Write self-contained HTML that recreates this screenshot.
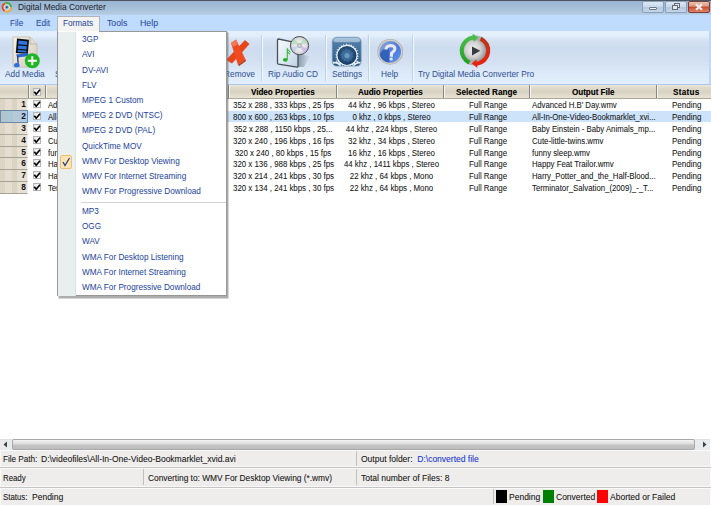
<!DOCTYPE html>
<html><head><meta charset="utf-8">
<style>
*{box-sizing:border-box;margin:0;padding:0}
html,body{width:711px;height:505px;overflow:hidden;background:#fff}
body{position:relative;font-family:"Liberation Sans",sans-serif;font-size:8.2px;color:#1e1e1e}
.a{position:absolute;white-space:nowrap}
#title{left:0;top:0;width:711px;height:15px;background:linear-gradient(#4c5660 0,#4c5660 1px,#9ab6d1 1px,#a2bcd6 6px,#aac3dc 10px,#b4cae0 14px,#bcd6f4 15px)}
#menubar{left:0;top:15px;width:711px;height:16px;background:#bfdbfd}
#toolbar{left:0;top:31px;width:709px;height:53px;background:linear-gradient(#e4effc 0,#e4effc 5px,#d6e4f4 8px,#cddcee 17px,#d2e0f1 30px,#dceaf9 42px,#e2eefb 53px)}
.mi{color:#23439a;font-size:8.4px}
.mm{font-size:9px;transform:scaleX(0.91);transform-origin:0 0}
.tl{color:#2f4f90;font-size:8.8px;transform:scaleX(0.945);transform-origin:0 0}
.sep{position:absolute;top:35px;width:1px;height:46px;background:#b9d2ee;box-shadow:1px 0 0 #f4f9ff}
#hdr{left:0;top:84px;width:711px;height:15px;background:linear-gradient(#aac8ee 0,#aac8ee 1px,#ece7da 1px,#e0dacb 4px,#d8d2c2 8px,#e2ddce 12px,#e6e2d4 14px,#aca898 14px)}
.hd{position:absolute;top:85px;width:1px;height:13px;background:#84888c;box-shadow:1px 0 0 #f8f4ea}
.hb{font-weight:bold;color:#000;font-size:8.6px;top:86.8px;transform:scaleX(0.935);transform-origin:0 0;text-shadow:0.2px 0 0 rgba(0,0,0,0.3)}
.rh{position:absolute;left:0;width:28px;height:12px;background:linear-gradient(90deg,#dcd4c4 0,#dcd4c4 5px,#e4ddd0 5px,#e4ddd0 12px,#dad3c4 12px,#dad3c4 17px,#e6e0d4 17px);border-bottom:1px solid #a8a294;border-right:1px solid #f4f0e8}
.rn{position:absolute;right:1.2px;top:0px;font-weight:bold;font-size:8.8px;color:#111;transform:scaleX(0.95);transform-origin:100% 0}
.cb{position:absolute;left:33px;width:8px;height:8px;border:1px solid #b4b4b4;background:linear-gradient(135deg,#e8e8e8,#fff)}
.cb svg{position:absolute;left:-1px;top:-1px}
.cl{transform:scaleX(0.94);transform-origin:0 0}
.cc{transform:scaleX(0.925);transform-origin:50% 0}
.cell{font-size:8.5px;color:#1a1a1a;text-shadow:0.2px 0 0 rgba(0,0,0,0.22)}
.strip{position:absolute;left:1px;width:709px;background:#efedeb}
.st{font-size:9px;color:#1a1a1a;transform-origin:0 0;transform:scaleX(0.945);text-shadow:0.2px 0 0 rgba(0,0,0,0.25)}
</style></head><body>

<!-- Title bar -->
<div id="title" class="a"></div>
<svg class="a" style="left:1px;top:1px" width="13" height="13" viewBox="0 0 13 13">
  <circle cx="5.8" cy="6.2" r="4.4" fill="#d8e4ee"></circle>
  <circle cx="5.8" cy="6.2" r="4.2" fill="none" stroke="#e04a28" stroke-width="2" stroke-dasharray="9 30" transform="rotate(120 5.8 6.2)"></circle>
  <circle cx="5.8" cy="6.2" r="4.2" fill="none" stroke="#3cb040" stroke-width="2" stroke-dasharray="8 30" transform="rotate(250 5.8 6.2)"></circle>
  <circle cx="5.8" cy="6.2" r="4.2" fill="none" stroke="#f0a838" stroke-width="2" stroke-dasharray="8 30" transform="rotate(0 5.8 6.2)"></circle>
  <circle cx="5.8" cy="6.2" r="2.2" fill="#9ab4cc"></circle>
  <circle cx="5.8" cy="6.2" r="1" fill="#384858"></circle>
</svg>
<div class="a" style="left:17.8px;top:2.1px;font-size:9.2px;color:#18202c;transform:scaleX(0.915);transform-origin:0 0">Digital Media Converter</div>
<!-- window buttons -->
<div class="a" style="left:642px;top:1px;width:22px;height:12px;border:1px solid #8a9fb8;border-radius:2px;background:linear-gradient(#dde8f4,#c8d8ea 50%,#b4c8de 51%,#c4d6ea)"></div>
<div class="a" style="left:649px;top:7px;width:8px;height:3px;background:#f4f4f4;border:1px solid #6a7888;border-radius:1px"></div>
<div class="a" style="left:665px;top:1px;width:22px;height:12px;border:1px solid #8a9fb8;border-radius:2px;background:linear-gradient(#dde8f4,#c8d8ea 50%,#b4c8de 51%,#c4d6ea)"></div>
<div class="a" style="left:674px;top:3px;width:6px;height:5px;background:#e8e8e8;border:1px solid #606a78"></div>
<div class="a" style="left:672px;top:5px;width:6px;height:5px;background:#e8e8e8;border:1px solid #606a78"></div>
<div class="a" style="left:688px;top:1px;width:22px;height:12px;border:1px solid #7a4038;border-radius:2px;background:linear-gradient(#ecc4b4,#dc9c84 40%,#c84830 52%,#d45a40 62%,#dc8466)"></div>
<svg class="a" style="left:694px;top:3px" width="10" height="8" viewBox="0 0 10 8"><path d="M2 1.2 L8 6.8 M8 1.2 L2 6.8" stroke="#f0eeee" stroke-width="2.2"></path></svg>

<!-- Menu bar -->
<div id="menubar" class="a"></div>
<div class="a mi mm" style="left:10px;top:18.2px">File</div>
<div class="a mi mm" style="left:36px;top:18.2px">Edit</div>
<div class="a mi mm" style="left:106.5px;top:18.2px;transform:scaleX(0.97)">Tools</div>
<div class="a mi mm" style="left:139.8px;top:18.2px;transform:scaleX(0.98)">Help</div>

<!-- Toolbar -->
<div id="toolbar" class="a"></div>
<div class="a" style="left:709px;top:31px;width:2px;height:53px;background:#bcd8f8"></div>
<!-- Add Media icon -->
<svg class="a" style="left:12px;top:36px" width="28" height="33" viewBox="0 0 28 33">
  <defs><linearGradient id="docg" x1="0" y1="0" x2="1" y2="1"><stop offset="0" stop-color="#f6f2ea"></stop><stop offset="1" stop-color="#d4ccbc"></stop></linearGradient></defs>
  <path d="M1 1 H18 L25 8 V31 H1 Z" fill="url(#docg)" stroke="#c0b8a8" stroke-width="0.8"></path>
  <path d="M18 1 V8 H25" fill="#e4dccc" stroke="#a8a090" stroke-width="0.6"></path>
  <path d="M5 2.5 L17 3.7 L15.8 18 L3.8 17 Z" fill="#0c1218"></path>
  <path d="M6.6 4.6 L15.2 5.4 L14.9 9 L6.3 8.2 Z M6.2 9.4 L14.8 10.2 L14.5 13.6 L5.9 12.8 Z M5.8 14 L14.4 14.8 L14.2 16.6 L5.6 15.8 Z" fill="#2f74e0"></path>
  <path d="M4 18.6 L15 17 L17 19 L15 20.2 L5.5 21.4 Z" fill="#2c66d0"></path>
  <path d="M5.6 20 L6.2 29" stroke="#1c3c80" stroke-width="1.3"></path>
  <ellipse cx="4.8" cy="29.2" rx="2.8" ry="2.1" fill="#2f70e0"></ellipse>
  <circle cx="20.3" cy="24.7" r="7.5" fill="#1eb422"></circle>
  <path d="M20.3 20.2 V29.2 M15.8 24.7 H24.8" stroke="#fff" stroke-width="2"></path>
</svg>
<div class="a tl" style="left:5px;top:69.3px">Add Media</div>
<div class="a tl" style="left:55.3px;top:69.3px">S</div>

<!-- Remove X -->
<svg class="a" style="left:222px;top:32px" width="32" height="36" viewBox="0 0 32 36">
  <path d="M23 8 L27.5 12 L10 31.5 L4 28 Z" fill="#e8441a"></path>
  <path d="M9 11 L14 7.5 L23.5 27.5 L16 33 Z" fill="#ee4c20"></path>
  <path d="M9 11 L14 7.5 L16 12 L11 15 Z" fill="#f47850"></path>
  <path d="M16 33 L23.5 27.5 L24 29 L17 34 Z" fill="#b03010"></path>
</svg>
<div class="a tl" style="left:223.5px;top:68.7px">Remove</div>
<div class="sep" style="left:261px"></div>

<!-- Rip Audio CD -->
<svg class="a" style="left:274px;top:34px" width="40" height="36" viewBox="0 0 40 36">
  <defs><linearGradient id="ripg" x1="0" y1="0" x2="1" y2="1"><stop offset="0" stop-color="#f6f9fc"></stop><stop offset="0.5" stop-color="#e0eaf4"></stop><stop offset="1" stop-color="#bcd0e4"></stop></linearGradient>
  <radialGradient id="cdg"><stop offset="0" stop-color="#f4f4f4"></stop><stop offset="0.6" stop-color="#e6e6ea"></stop><stop offset="1" stop-color="#cacad2"></stop></radialGradient>
  <linearGradient id="shd" x1="0" y1="0" x2="1" y2="0"><stop offset="0" stop-color="#506070" stop-opacity="0.55"></stop><stop offset="1" stop-color="#506070" stop-opacity="0"></stop></linearGradient></defs>
  <path d="M24 20 L36 22 L30 33 L24 33 Z" fill="url(#shd)"></path>
  <path d="M4.5 5 Q3.5 5 3.5 6 L3.5 29 Q3.5 30 4.5 30.2 L23 33.2 Q24 33.3 24 32.3 L24 12 L17 7.5 Z" fill="url(#ripg)" stroke="#4a5058" stroke-width="1.3"></path>
  <circle cx="25.5" cy="11.6" r="9.1" fill="url(#cdg)" stroke="#484850" stroke-width="1"></circle>
  <path d="M25.5 11.6 L17.5 9 A8.5 8.5 0 0 1 20.5 4.6 Z" fill="#a8dca8" opacity="0.75"></path>
  <path d="M25.5 11.6 L33.5 14.5 A8.5 8.5 0 0 1 30 19 Z" fill="#c4b4ec" opacity="0.75"></path>
  <path d="M25.5 11.6 L29.5 4 A8.5 8.5 0 0 1 33.6 8.6 Z" fill="#a8dca8" opacity="0.65"></path>
  <path d="M25.5 11.6 L17.2 13.5 A8.5 8.5 0 0 0 20 18.2 Z" fill="#b4ccf0" opacity="0.6"></path>
  <circle cx="25.5" cy="11.6" r="2" fill="#d0d0d8" stroke="#9090a0" stroke-width="0.6"></circle>
  <path d="M13.3 25.5 L13.3 15 L16.5 18.5 M13.3 17.5 L16 20.5" fill="none" stroke="#38b838" stroke-width="1.1"></path>
  <ellipse cx="11.3" cy="25.8" rx="2.4" ry="1.9" fill="#28b028"></ellipse>
</svg>
<div class="a tl" style="left:268px;top:68.7px">Rip Audio CD</div>
<div class="sep" style="left:325px"></div>

<!-- Settings -->
<svg class="a" style="left:331px;top:36px" width="32" height="32" viewBox="0 0 32 32">
  <defs><linearGradient id="setg" x1="0" y1="0" x2="0" y2="1"><stop offset="0" stop-color="#8aaccb"></stop><stop offset="0.18" stop-color="#4f7ca6"></stop><stop offset="0.6" stop-color="#3a6a96"></stop><stop offset="1" stop-color="#2e5a84"></stop></linearGradient>
  <radialGradient id="setin" cx="0.5" cy="0.45" r="0.55"><stop offset="0" stop-color="#4a7aa8"></stop><stop offset="0.5" stop-color="#2a5580"></stop><stop offset="1" stop-color="#173a60"></stop></radialGradient>
  <clipPath id="setc"><rect x="1.3" y="1.2" width="28.8" height="28.9" rx="4.5"></rect></clipPath></defs>
  <rect x="1.3" y="1.2" width="28.8" height="28.9" rx="4.5" fill="url(#setg)"></rect>
  <g clip-path="url(#setc)">
  <rect x="2.5" y="2" width="26.5" height="4.2" rx="2" fill="#c0d4e6" opacity="0.65"></rect>
  <circle cx="16" cy="19.4" r="10.6" fill="#dce8f2"></circle>
  <path d="M26.30 19.40 L28.28 20.14 L26.22 20.64 L26.00 21.86 L27.74 23.06 L25.63 23.05 L25.12 24.19 L26.53 25.76 L24.48 25.25 L23.71 26.23 L24.70 28.10 L22.83 27.11 L21.85 27.88 L22.36 29.93 L20.79 28.52 L19.65 29.03 L19.66 31.14 L18.46 29.40 L17.24 29.62 L16.74 31.68 L16.00 29.70 L14.76 29.62 L13.78 31.50 L13.54 29.40 L12.35 29.03 L10.95 30.62 L11.21 28.52 L10.15 27.88 L8.41 29.08 L9.17 27.11 L8.29 26.23 L6.32 26.99 L7.52 25.25 L6.88 24.19 L4.78 24.45 L6.37 23.05 L6.00 21.86 L3.90 21.62 L5.78 20.64 L5.70 19.40 L3.72 18.66 L5.78 18.16 L6.00 16.94 L4.26 15.74 L6.37 15.75 L6.88 14.61 L5.47 13.04 L7.52 13.55 L8.29 12.57 L7.30 10.70 L9.17 11.69 L10.15 10.92 L9.64 8.87 L11.21 10.28 L12.35 9.77 L12.34 7.66 L13.54 9.40 L14.76 9.18 L15.26 7.12 L16.00 9.10 L17.24 9.18 L18.22 7.30 L18.46 9.40 L19.65 9.77 L21.05 8.18 L20.79 10.28 L21.85 10.92 L23.59 9.72 L22.83 11.69 L23.71 12.57 L25.68 11.81 L24.48 13.55 L25.12 14.61 L27.22 14.35 L25.63 15.75 L26.00 16.94 L28.10 17.18 L26.22 18.16 Z" fill="#eef4fa"></path>
  <circle cx="16" cy="19.4" r="9.5" fill="url(#setin)"></circle>
  <path d="M21.40 19.40 L22.70 20.57 L21.08 21.23 L20.37 22.57 L20.73 24.28 L19.04 23.87 L17.67 24.54 L16.96 26.13 L15.83 24.80 L14.33 24.54 L12.82 25.41 L12.69 23.67 L11.63 22.57 L9.89 22.39 L10.81 20.91 L10.60 19.40 L9.30 18.23 L10.92 17.57 L11.63 16.23 L11.27 14.52 L12.96 14.93 L14.33 14.26 L15.04 12.67 L16.17 14.00 L17.67 14.26 L19.18 13.39 L19.31 15.13 L20.37 16.23 L22.11 16.41 L21.19 17.89 Z" fill="#3c6c9a"></path>
  <circle cx="16" cy="19.5" r="2.6" fill="#6a98c0"></circle>
  <path d="M11.16 33.72 L12.37 34.97 L10.73 35.55 L9.84 37.20 L10.27 38.89 L8.56 38.57 L6.96 39.56 L6.48 41.23 L5.16 40.11 L3.28 40.16 L2.03 41.37 L1.45 39.73 L-0.20 38.84 L-1.89 39.27 L-1.57 37.56 L-2.56 35.96 L-4.23 35.48 L-3.11 34.16 L-3.16 32.28 L-4.37 31.03 L-2.73 30.45 L-1.84 28.80 L-2.27 27.11 L-0.56 27.43 L1.04 26.44 L1.52 24.77 L2.84 25.89 L4.72 25.84 L5.97 24.63 L6.55 26.27 L8.20 27.16 L9.89 26.73 L9.57 28.44 L10.56 30.04 L12.23 30.52 L11.11 31.84 Z" fill="#e4eef6"></path>
  <path d="M35.06 34.43 L36.13 35.79 L34.45 36.21 L33.40 37.77 L33.65 39.49 L31.98 39.00 L30.29 39.83 L29.65 41.44 L28.44 40.19 L26.57 40.06 L25.21 41.13 L24.79 39.45 L23.23 38.40 L21.51 38.65 L22.00 36.98 L21.17 35.29 L19.56 34.65 L20.81 33.44 L20.94 31.57 L19.87 30.21 L21.55 29.79 L22.60 28.23 L22.35 26.51 L24.02 27.00 L25.71 26.17 L26.35 24.56 L27.56 25.81 L29.43 25.94 L30.79 24.87 L31.21 26.55 L32.77 27.60 L34.49 27.35 L34.00 29.02 L34.83 30.71 L36.44 31.35 L35.19 32.56 Z" fill="#e4eef6"></path>
  <circle cx="4" cy="33" r="5.4" fill="#2a5680"></circle>
  <circle cx="28" cy="33" r="5.4" fill="#2a5680"></circle>
  </g>
  <rect x="1.3" y="1.2" width="28.8" height="28.9" rx="4.5" fill="none" stroke="#6a90b0" stroke-width="0.7"></rect>
</svg>
<div class="a tl" style="left:332px;top:68.7px">Settings</div>
<div class="sep" style="left:368px"></div>

<!-- Help -->
<svg class="a" style="left:376px;top:38px" width="28" height="28" viewBox="0 0 28 28">
  <defs><linearGradient id="hg" x1="0" y1="0" x2="1" y2="1"><stop offset="0" stop-color="#a0b4d8"></stop><stop offset="0.4" stop-color="#5a84dc"></stop><stop offset="0.6" stop-color="#4a78e4"></stop><stop offset="1" stop-color="#6a9ce0"></stop></linearGradient></defs>
  <circle cx="14.2" cy="13.8" r="12.8" fill="#a8a49c"></circle>
  <circle cx="14.2" cy="13.8" r="12.2" fill="#d4d0ca"></circle>
  <circle cx="14.2" cy="13.8" r="10.8" fill="url(#hg)"></circle>
  <path d="M3.6 17 Q5 10.5 13 10 L13.5 24.6 Q6 24 3.6 17 Z" fill="#2c5cb4" opacity="0.85"></path>
  <path d="M10 11.5 Q10.3 7.6 14.8 7.5 Q19.3 7.7 18.8 11.3 Q18.4 13.4 15.8 15 L15.2 18.8" fill="none" stroke="#e8e8ec" stroke-width="3.2"></path>
  <rect x="13.6" y="19.6" width="3" height="2.8" fill="#e4e4e8"></rect>
</svg>
<div class="a tl" style="left:381px;top:68.7px">Help</div>
<div class="sep" style="left:412px"></div>

<!-- Converter Pro -->
<svg class="a" style="left:458px;top:34px" width="34" height="35" viewBox="0 0 34 35">
  <defs><radialGradient id="sph" cx="0.42" cy="0.45" r="0.62"><stop offset="0" stop-color="#f2f2f2"></stop><stop offset="0.55" stop-color="#d0d0d0"></stop><stop offset="1" stop-color="#888"></stop></radialGradient>
  <linearGradient id="grn" x1="0" y1="0" x2="0" y2="1"><stop offset="0" stop-color="#50c050"></stop><stop offset="1" stop-color="#20a020"></stop></linearGradient>
  <linearGradient id="red" x1="0" y1="0" x2="0" y2="1"><stop offset="0" stop-color="#b83818"></stop><stop offset="1" stop-color="#f02010"></stop></linearGradient></defs>
  <circle cx="17" cy="16.6" r="15" fill="#b0b0b0"></circle>
  <circle cx="17" cy="16.6" r="11.6" fill="url(#sph)"></circle>
  <path d="M10.53 30.47 A15.30 15.30 0 0 1 14.87 1.45 L14.56 -0.73 L20.21 3.74 L15.75 7.69 L15.44 5.51 A11.20 11.20 0 0 0 12.27 26.75 Z" fill="url(#grn)"></path>
  <path d="M23.47 2.73 A15.30 15.30 0 0 1 19.13 31.75 L19.44 33.93 L13.79 29.46 L18.25 25.51 L18.56 27.69 A11.20 11.20 0 0 0 21.73 6.45 Z" fill="url(#red)"></path>
  <path d="M14 12.6 L22.3 16.8 L14 21.4 Z" fill="#3a3a42"></path>
</svg>
<div class="a tl" style="left:418px;top:68.7px">Try Digital Media Converter Pro</div>

<!-- Grid header -->
<div id="hdr" class="a"></div>
<div class="hd" style="left:28px"></div>
<div class="hd" style="left:45px"></div>
<div class="hd" style="left:228px"></div>
<div class="hd" style="left:336px"></div>
<div class="hd" style="left:443px"></div>
<div class="hd" style="left:529px"></div>
<div class="hd" style="left:656px"></div>
<div class="cb" style="top:88px"><svg width="8" height="8" viewBox="0 0 8 8"><path d="M1.3 3.8 L3.2 6.2 L7 1.8" fill="none" stroke="#000" stroke-width="1.7"></path></svg></div>
<div class="a hb" style="left:251px">Video Properties</div>
<div class="a hb" style="left:358px">Audio Properties</div>
<div class="a hb" style="left:456.3px;letter-spacing:0.1px">Selected Range</div>
<div class="a hb" style="left:572px">Output File</div>
<div class="a hb" style="left:673px;letter-spacing:0.35px">Status</div>

<!-- Rows -->
<div class="a" style="left:28px;top:111px;width:683px;height:11px;background:#cce3fa"></div>
<div class="rh" style="top:99px;height:12px;"><span class="rn">1</span></div><div class="cb" style="top:100px"><svg width="8" height="8" viewBox="0 0 8 8"><path d="M1.3 3.8 L3.2 6.2 L7 1.8" fill="none" stroke="#000" stroke-width="1.7"></path></svg></div><div class="a cell cl" style="left:47.5px;top:99.6px;transform:scaleX(0.9)">Advanced H.B' Day.wmv</div><div class="a cell cc" style="left:229px;width:108px;text-align:center;top:99.6px">352 x 288 , 333 kbps , 25 fps</div><div class="a cell cc" style="left:338px;width:107px;text-align:center;top:99.6px">44 khz , 96 kbps , Stereo</div><div class="a cell cc" style="left:445px;width:86px;text-align:center;top:99.6px">Full Range</div><div class="a cell cl" style="left:532px;top:99.6px;transform:scaleX(0.915)">Advanced H.B' Day.wmv</div><div class="a cell cl" style="left:672px;top:99.6px">Pending</div><div class="rh" style="top:111px;height:12px;background:linear-gradient(90deg,#b4c4cc 0,#b4c4cc 5px,#a8c8d4 5px,#a8c8d4 12px,#b8c8d4 12px,#b8c8d4 17px,#b0c8e2 17px);border:1px solid #6a8aa8;top:110px;height:13px"><span class="rn">2</span></div><div class="cb" style="top:112px"><svg width="8" height="8" viewBox="0 0 8 8"><path d="M1.3 3.8 L3.2 6.2 L7 1.8" fill="none" stroke="#000" stroke-width="1.7"></path></svg></div><div class="a cell cl" style="left:47.5px;top:111.6px;transform:scaleX(0.9)">All-In-One-Video-Bookmarklet_xvid.avi</div><div class="a cell cc" style="left:229px;width:108px;text-align:center;top:111.6px">800 x 600 , 263 kbps , 10 fps</div><div class="a cell cc" style="left:338px;width:107px;text-align:center;top:111.6px">0 khz , 0 kbps , Stereo</div><div class="a cell cc" style="left:445px;width:86px;text-align:center;top:111.6px">Full Range</div><div class="a cell cl" style="left:532px;top:111.6px;transform:scaleX(0.915)">All-In-One-Video-Bookmarklet_xvi...</div><div class="a cell cl" style="left:672px;top:111.6px">Pending</div><div class="rh" style="top:123px;height:12px;"><span class="rn">3</span></div><div class="cb" style="top:124px"><svg width="8" height="8" viewBox="0 0 8 8"><path d="M1.3 3.8 L3.2 6.2 L7 1.8" fill="none" stroke="#000" stroke-width="1.7"></path></svg></div><div class="a cell cl" style="left:47.5px;top:123.6px;transform:scaleX(0.9)">Baby Einstein - Baby Animals.mpg</div><div class="a cell cc" style="left:229px;width:108px;text-align:center;top:123.6px">352 x 288 , 1150 kbps , 25...</div><div class="a cell cc" style="left:338px;width:107px;text-align:center;top:123.6px">44 khz , 224 kbps , Stereo</div><div class="a cell cc" style="left:445px;width:86px;text-align:center;top:123.6px">Full Range</div><div class="a cell cl" style="left:532px;top:123.6px;transform:scaleX(0.915)">Baby Einstein - Baby Animals_mp...</div><div class="a cell cl" style="left:672px;top:123.6px">Pending</div><div class="rh" style="top:135px;height:12px;"><span class="rn">4</span></div><div class="cb" style="top:136px"><svg width="8" height="8" viewBox="0 0 8 8"><path d="M1.3 3.8 L3.2 6.2 L7 1.8" fill="none" stroke="#000" stroke-width="1.7"></path></svg></div><div class="a cell cl" style="left:47.5px;top:135.6px;transform:scaleX(0.9)">Cute-little-twins.avi</div><div class="a cell cc" style="left:229px;width:108px;text-align:center;top:135.6px">320 x 240 , 196 kbps , 16 fps</div><div class="a cell cc" style="left:338px;width:107px;text-align:center;top:135.6px">32 khz , 34 kbps , Stereo</div><div class="a cell cc" style="left:445px;width:86px;text-align:center;top:135.6px">Full Range</div><div class="a cell cl" style="left:532px;top:135.6px;transform:scaleX(0.915)">Cute-little-twins.wmv</div><div class="a cell cl" style="left:672px;top:135.6px">Pending</div><div class="rh" style="top:147px;height:11px;"><span class="rn">5</span></div><div class="cb" style="top:148px"><svg width="8" height="8" viewBox="0 0 8 8"><path d="M1.3 3.8 L3.2 6.2 L7 1.8" fill="none" stroke="#000" stroke-width="1.7"></path></svg></div><div class="a cell cl" style="left:47.5px;top:147.6px;transform:scaleX(0.9)">funny sleep.avi</div><div class="a cell cc" style="left:229px;width:108px;text-align:center;top:147.6px">320 x 240 , 80 kbps , 15 fps</div><div class="a cell cc" style="left:338px;width:107px;text-align:center;top:147.6px">16 khz , 16 kbps , Stereo</div><div class="a cell cc" style="left:445px;width:86px;text-align:center;top:147.6px">Full Range</div><div class="a cell cl" style="left:532px;top:147.6px;transform:scaleX(0.915)">funny sleep.wmv</div><div class="a cell cl" style="left:672px;top:147.6px">Pending</div><div class="rh" style="top:158px;height:12px;"><span class="rn">6</span></div><div class="cb" style="top:159px"><svg width="8" height="8" viewBox="0 0 8 8"><path d="M1.3 3.8 L3.2 6.2 L7 1.8" fill="none" stroke="#000" stroke-width="1.7"></path></svg></div><div class="a cell cl" style="left:47.5px;top:158.6px;transform:scaleX(0.9)">Happy Feat Trailor.avi</div><div class="a cell cc" style="left:229px;width:108px;text-align:center;top:158.6px">320 x 136 , 988 kbps , 25 fps</div><div class="a cell cc" style="left:338px;width:107px;text-align:center;top:158.6px">44 khz , 1411 kbps , Stereo</div><div class="a cell cc" style="left:445px;width:86px;text-align:center;top:158.6px">Full Range</div><div class="a cell cl" style="left:532px;top:158.6px;transform:scaleX(0.915)">Happy Feat Trailor.wmv</div><div class="a cell cl" style="left:672px;top:158.6px">Pending</div><div class="rh" style="top:170px;height:12px;"><span class="rn">7</span></div><div class="cb" style="top:171px"><svg width="8" height="8" viewBox="0 0 8 8"><path d="M1.3 3.8 L3.2 6.2 L7 1.8" fill="none" stroke="#000" stroke-width="1.7"></path></svg></div><div class="a cell cl" style="left:47.5px;top:170.6px;transform:scaleX(0.9)">Harry_Potter.avi</div><div class="a cell cc" style="left:229px;width:108px;text-align:center;top:170.6px">320 x 214 , 241 kbps , 30 fps</div><div class="a cell cc" style="left:338px;width:107px;text-align:center;top:170.6px">22 khz , 64 kbps , Mono</div><div class="a cell cc" style="left:445px;width:86px;text-align:center;top:170.6px">Full Range</div><div class="a cell cl" style="left:532px;top:170.6px;transform:scaleX(0.915)">Harry_Potter_and_the_Half-Blood...</div><div class="a cell cl" style="left:672px;top:170.6px">Pending</div><div class="rh" style="top:182px;height:12px;"><span class="rn">8</span></div><div class="cb" style="top:183px"><svg width="8" height="8" viewBox="0 0 8 8"><path d="M1.3 3.8 L3.2 6.2 L7 1.8" fill="none" stroke="#000" stroke-width="1.7"></path></svg></div><div class="a cell cl" style="left:47.5px;top:182.6px;transform:scaleX(0.9)">Terminator.avi</div><div class="a cell cc" style="left:229px;width:108px;text-align:center;top:182.6px">320 x 134 , 241 kbps , 30 fps</div><div class="a cell cc" style="left:338px;width:107px;text-align:center;top:182.6px">22 khz , 64 kbps , Mono</div><div class="a cell cc" style="left:445px;width:86px;text-align:center;top:182.6px">Full Range</div><div class="a cell cl" style="left:532px;top:182.6px;transform:scaleX(0.915)">Terminator_Salvation_(2009)_-_T...</div><div class="a cell cl" style="left:672px;top:182.6px">Pending</div>


<!-- Scrollbar -->
<div class="a" style="left:0;top:439px;width:710px;height:11px;background:#e9ecee;border-top:1px solid #e0e0e0"></div>
<div class="a" style="left:12px;top:439px;width:683px;height:11px;border:1px solid #a8a8a8;border-radius:2px;background:linear-gradient(#f4f4f4,#dcdcdc 45%,#c4c4c4 55%,#bcbcbc)"></div>
<svg class="a" style="left:3px;top:441px" width="5" height="7"><path d="M4 0.5 L0.5 3.5 L4 6.5 Z" fill="#404040"></path></svg>
<svg class="a" style="left:702px;top:441px" width="5" height="7"><path d="M1 0.5 L4.5 3.5 L1 6.5 Z" fill="#404040"></path></svg>

<!-- Status strips -->
<div class="a" style="left:0;top:450px;width:711px;height:55px;background:#f9f9f9"></div>
<div class="strip" style="top:451px;height:15px"></div>
<div class="a" style="left:0;top:467px;width:711px;height:1px;background:#c4c4c4"></div>
<div class="strip" style="top:469px;height:17px"></div>
<div class="a" style="left:0;top:487px;width:711px;height:1px;background:#c4c4c4"></div>
<div class="strip" style="top:489px;height:16px"></div>
<div class="a" style="left:356px;top:451px;width:1px;height:15px;background:#c0c0c0"></div>
<div class="a" style="left:143px;top:469px;width:1px;height:16px;background:#c0c0c0"></div>
<div class="a" style="left:356px;top:469px;width:1px;height:16px;background:#c0c0c0"></div>
<div class="a" style="left:493px;top:489px;width:1px;height:15px;background:#c0c0c0"></div>

<div class="a st" style="left:3px;top:454px;transform:scaleX(0.9)">File Path:</div>
<div class="a st" style="left:40.5px;top:454px">D:\videofiles\All-In-One-Video-Bookmarklet_xvid.avi</div>
<div class="a st" style="left:361px;top:454px">Output folder:&nbsp; <span style="color:#2040e0">D:\converted file</span></div>
<div class="a st" style="left:2.8px;top:473px;transform:scaleX(0.87)">Ready</div>
<div class="a st" style="left:148px;top:473px;transform:scaleX(0.925)">Converting to: WMV For Desktop Viewing (*.wmv)</div>
<div class="a st" style="left:361px;top:473px">Total number of Files: 8</div>
<div class="a st" style="left:2.8px;top:492px;transform:scaleX(0.87)">Status:</div>
<div class="a st" style="left:32px;top:492px">Pending</div>
<div class="a" style="left:496px;top:490px;width:11px;height:13px;background:#000"></div>
<div class="a st" style="left:509px;top:492px">Pending</div>
<div class="a" style="left:543px;top:490px;width:11px;height:13px;background:#008000"></div>
<div class="a st" style="left:556px;top:492px">Converted</div>
<div class="a" style="left:597px;top:490px;width:11px;height:13px;background:#ff0000"></div>
<div class="a st" style="left:610px;top:492px">Aborted or Failed</div>

<!-- Formats tab & dropdown -->
<div class="a" style="left:57px;top:16px;width:43px;height:16px;background:#f3f3f1;border:1px solid #b0b4b8;border-bottom:none"></div>
<div class="a mi mm" style="left:63px;top:18.2px">Formats</div>
<div class="a" style="left:57px;top:31px;width:170px;height:266px;background:#6a6a6a;opacity:0.55;transform:translate(1.5px,1.5px)"></div>
<div class="a" style="left:57px;top:31px;width:170px;height:265px;background:#fff;border:1px solid #979797;border-top:none"></div>
<div class="a" style="left:58px;top:32px;width:18px;height:264px;background:#e9eeee;border-right:1px solid #dde2e2"></div>
<div class="a" style="left:99px;top:31px;width:127px;height:1px;background:#979797"></div>
<div class="a" style="left:81px;top:202px;width:145px;height:1px;background:#d4d4d4"></div>
<div class="a" style="left:60px;top:155px;width:12px;height:14px;background:#fde4b4;border:1px solid #f0c070;border-radius:2px"></div>
<svg class="a" style="left:61px;top:157px" width="10" height="10" viewBox="0 0 10 10"><path d="M2 5 L4 8.5 L8.5 1" fill="none" stroke="#24408a" stroke-width="1.3"></path></svg>
<div class="a mi mm" style="left:82px;top:34.1px">3GP</div><div class="a mi mm" style="left:82px;top:49.33px">AVI</div><div class="a mi mm" style="left:82px;top:64.56px">DV-AVI</div><div class="a mi mm" style="left:82px;top:79.79px">FLV</div><div class="a mi mm" style="left:82px;top:95.02px">MPEG 1 Custom</div><div class="a mi mm" style="left:82px;top:110.25px">MPEG 2 DVD (NTSC)</div><div class="a mi mm" style="left:82px;top:125.48px">MPEG 2 DVD (PAL)</div><div class="a mi mm" style="left:82px;top:140.71px">QuickTime MOV</div><div class="a mi mm" style="left:82px;top:155.94px">WMV For Desktop Viewing</div><div class="a mi mm" style="left:82px;top:171.17px">WMV For Internet Streaming</div><div class="a mi mm" style="left:82px;top:186.4px">WMV For Progressive Download</div><div class="a mi mm" style="left:82px;top:206.25px">MP3</div><div class="a mi mm" style="left:82px;top:221.35px">OGG</div><div class="a mi mm" style="left:82px;top:236.45px">WAV</div><div class="a mi mm" style="left:82px;top:251.55px">WMA For Desktop Listening</div><div class="a mi mm" style="left:82px;top:266.65px">WMA For Internet Streaming</div><div class="a mi mm" style="left:82px;top:281.75px">WMA For Progressive Download</div>


</body></html>
